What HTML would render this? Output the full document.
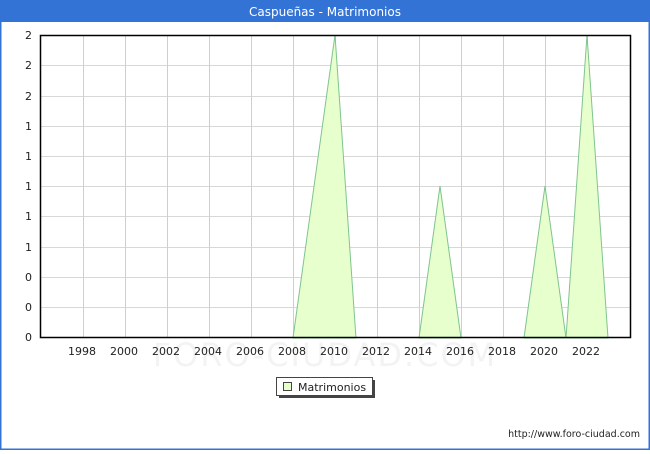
<!DOCTYPE html>
<html><head><style>
body{margin:0;width:650px;height:450px;overflow:hidden;font-family:"DejaVu Sans","Liberation Sans",sans-serif;background:#fff}
</style></head><body>
<svg width="650" height="450" xmlns="http://www.w3.org/2000/svg" font-family="DejaVu Sans, Liberation Sans, sans-serif">
<rect x="0" y="0" width="650" height="450" fill="#fff"/>
<rect x="0.5" y="0.5" width="649" height="449" fill="none" stroke="#3473d6" stroke-width="2"/>
<rect x="0" y="0" width="650" height="22" fill="#3473d6"/>
<text x="325" y="16" fill="#fff" font-size="12" text-anchor="middle">Caspueñas - Matrimonios</text>
<text x="325" y="366" fill="#f3f3f3" font-size="32" text-anchor="middle" letter-spacing="2">FORO-CIUDAD.COM</text>
<g stroke="#d8d8d8" stroke-width="1">
<line x1="40" y1="65.5" x2="630" y2="65.5"/><line x1="40" y1="96.5" x2="630" y2="96.5"/><line x1="40" y1="126.5" x2="630" y2="126.5"/><line x1="40" y1="156.5" x2="630" y2="156.5"/><line x1="40" y1="186.5" x2="630" y2="186.5"/><line x1="40" y1="216.5" x2="630" y2="216.5"/><line x1="40" y1="247.5" x2="630" y2="247.5"/><line x1="40" y1="277.5" x2="630" y2="277.5"/><line x1="40" y1="307.5" x2="630" y2="307.5"/>
</g>
<g stroke="#cfcfcf" stroke-width="1">
<line x1="83.5" y1="35" x2="83.5" y2="338"/><line x1="125.5" y1="35" x2="125.5" y2="338"/><line x1="167.5" y1="35" x2="167.5" y2="338"/><line x1="209.5" y1="35" x2="209.5" y2="338"/><line x1="251.5" y1="35" x2="251.5" y2="338"/><line x1="293.5" y1="35" x2="293.5" y2="338"/><line x1="335.5" y1="35" x2="335.5" y2="338"/><line x1="377.5" y1="35" x2="377.5" y2="338"/><line x1="419.5" y1="35" x2="419.5" y2="338"/><line x1="461.5" y1="35" x2="461.5" y2="338"/><line x1="503.5" y1="35" x2="503.5" y2="338"/><line x1="545.5" y1="35" x2="545.5" y2="338"/><line x1="587.5" y1="35" x2="587.5" y2="338"/>
</g>
<g fill="#e6ffcc" stroke="#7fc48f" stroke-width="1">
<polygon points="293,338 335,35 356,338"/>
<polygon points="419,338 440,186 461,338"/>
<polygon points="524,338 545,186 566,338"/>
<polygon points="566,338 587,35 608,338"/>
</g>
<rect x="40.5" y="35.5" width="590" height="302" fill="none" stroke="#000" stroke-width="1.5"/>
<g font-size="11" fill="#222" text-anchor="end">
<text x="32" y="39">2</text><text x="32" y="69">2</text><text x="32" y="100">2</text><text x="32" y="130">1</text><text x="32" y="160">1</text><text x="32" y="190">1</text><text x="32" y="220">1</text><text x="32" y="251">1</text><text x="32" y="281">0</text><text x="32" y="311">0</text><text x="32" y="341">0</text>
</g>
<g font-size="11" fill="#222" text-anchor="middle">
<text x="82" y="355">1998</text><text x="124" y="355">2000</text><text x="166" y="355">2002</text><text x="208" y="355">2004</text><text x="250" y="355">2006</text><text x="292" y="355">2008</text><text x="334" y="355">2010</text><text x="376" y="355">2012</text><text x="418" y="355">2014</text><text x="460" y="355">2016</text><text x="502" y="355">2018</text><text x="544" y="355">2020</text><text x="586" y="355">2022</text>
</g>
<rect x="279" y="380" width="96" height="18" fill="#444"/>
<rect x="276.5" y="377.5" width="96" height="18" fill="#fff" stroke="#444"/>
<rect x="283.5" y="382.5" width="8" height="8" fill="#e6ffcc" stroke="#444"/>
<text x="298" y="391" font-size="11" fill="#222">Matrimonios</text>
<text x="640" y="437" font-size="9.5" fill="#222" text-anchor="end">http://www.foro-ciudad.com</text>
</svg>
</body></html>
